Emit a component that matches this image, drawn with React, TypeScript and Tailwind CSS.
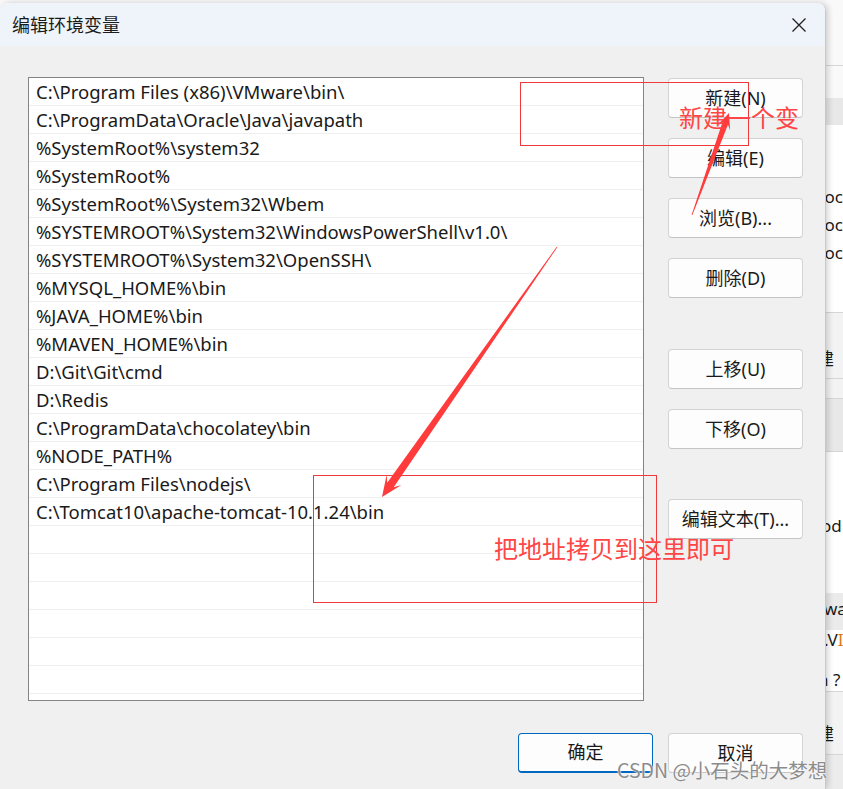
import React from "react";

const paths = [
  "C:\\Program Files (x86)\\VMware\\bin\\",
  "C:\\ProgramData\\Oracle\\Java\\javapath",
  "%SystemRoot%\\system32",
  "%SystemRoot%",
  "%SystemRoot%\\System32\\Wbem",
  "%SYSTEMROOT%\\System32\\WindowsPowerShell\\v1.0\\",
  "%SYSTEMROOT%\\System32\\OpenSSH\\",
  "%MYSQL_HOME%\\bin",
  "%JAVA_HOME%\\bin",
  "%MAVEN_HOME%\\bin",
  "D:\\Git\\Git\\cmd",
  "D:\\Redis",
  "C:\\ProgramData\\chocolatey\\bin",
  "%NODE_PATH%",
  "C:\\Program Files\\nodejs\\",
  "C:\\Tomcat10\\apache-tomcat-10.1.24\\bin",
];

const rows = [...paths, ...Array(22 - paths.length).fill("")];

const uiFont = { fontFamily: '"Noto Sans", "Noto Sans CJK SC", sans-serif' };
const cjkFont = { fontFamily: '"Noto Sans CJK SC", "Noto Sans", sans-serif' };

// tapered screenshot-tool style arrow, tail -> tip
function arrowPoints(tx: number, ty: number, px: number, py: number, head: number, half: number, neck: number) {
  const dx = px - tx;
  const dy = py - ty;
  const len = Math.hypot(dx, dy);
  const ux = dx / len;
  const uy = dy / len;
  const nx = -uy;
  const ny = ux;
  const bx = px - ux * head;
  const by = py - uy * head;
  const kx = px - ux * head * 0.7;
  const ky = py - uy * head * 0.7;
  const pts = [
    [tx + nx * 0.4, ty + ny * 0.4],
    [kx + nx * neck, ky + ny * neck],
    [bx + nx * half, by + ny * half],
    [px, py],
    [bx - nx * half, by - ny * half],
    [kx - nx * neck, ky - ny * neck],
    [tx - nx * 0.4, ty - ny * 0.4],
  ];
  return pts.map((p) => p.map((v) => v.toFixed(1)).join(",")).join(" ");
}

const DlgButton: React.FC<{ label: string; primary?: boolean }> = ({ label, primary }) => (
  <button
    className={
      primary
        ? "w-[135px] h-[40px] rounded-[4px] border border-[#0067c0] border-b-2 bg-[#fdfdfd] text-[18px] text-[#1a1a1a]"
        : "w-[135px] h-[40px] rounded-[4px] border border-[#d3d3d3] border-b-[#c4c4c4] bg-[#fdfdfd] text-[18px] text-[#1a1a1a]"
    }
    style={uiFont}
  >
    {label}
  </button>
);

const BackStrip: React.FC = () => (
  <div className="flex-1 flex flex-col overflow-hidden bg-[#f9f9f9] text-[17px] text-[#1a1a1a]" style={uiFont}>
    <div className="h-[66px] border-b border-[#d6d6d6]" />
    <div className="h-[32px]" />
    <div className="h-[27px] bg-[#e8e8e8]" />
    <div className="h-[58px] bg-white" />
    <div className="h-[28px] bg-white leading-[28px] whitespace-nowrap -ml-[6px]">loca</div>
    <div className="h-[28px] bg-white leading-[28px] whitespace-nowrap -ml-[6px]">loca</div>
    <div className="h-[28px] bg-white leading-[28px] whitespace-nowrap -ml-[6px]">loca</div>
    <div className="h-[46px] bg-white border-b border-[#d6d6d6]" />
    <div className="h-[32px] bg-[#f3f3f3]" />
    <div className="h-[34px] bg-[#f3f3f3] leading-[28px] whitespace-nowrap -ml-[9px] border-b border-[#d6d6d6]">建</div>
    <div className="h-[20px] bg-[#f3f3f3] border-b border-[#d6d6d6]" />
    <div className="h-[53px] bg-[#e8e8e8] border-b border-[#d6d6d6]" />
    <div className="h-[60px] bg-white" />
    <div className="h-[28px] bg-white leading-[28px] whitespace-nowrap -ml-[5px]">od</div>
    <div className="h-[53px] bg-white" />
    <div className="h-[37px] bg-[#ebebeb] leading-[32px] whitespace-nowrap -ml-[2px]">wa</div>
    <div className="h-[30px] bg-white leading-[20px] whitespace-nowrap -ml-[2px]">
      .V<span className="text-[#d97a1a]">I</span>
    </div>
    <div className="h-[32px] bg-white leading-[40px] whitespace-nowrap -ml-[8px] border-b border-[#d6d6d6]">n ?</div>
    <div className="h-[32px] bg-[#f3f3f3]" />
    <div className="h-[31px] bg-[#f3f3f3] leading-[20px] whitespace-nowrap -ml-[9px] border-b border-[#d6d6d6]">建</div>
    <div className="flex-1 bg-[#ececec]" />
  </div>
);

export default function App() {
  return (
    <div className="relative w-[843px] h-[789px] overflow-hidden bg-[#f9f9f9] flex">
      <div className="w-[826px] mt-[3px] flex flex-col rounded-t-[8px] overflow-hidden border-r border-[#c8c8c8] shadow-[2px_0_6px_rgba(0,0,0,0.18)] z-10">
        <div className="h-[43px] bg-[#eff3fa] flex items-center justify-between pl-[12px] pr-[18px]">
          <span className="text-[18px] text-[#1b1b1b]" style={cjkFont}>
            编辑环境变量
          </span>
          <svg width="16" height="16" viewBox="0 0 16 16">
            <path d="M1.5 1.5 L14.5 14.5 M14.5 1.5 L1.5 14.5" stroke="#1f1f1f" strokeWidth="1.3" fill="none" />
          </svg>
        </div>
        <div className="flex-1 bg-[#f0f0f0] flex flex-col pt-[31px]">
          <div className="flex">
            <div className="ml-[28px] w-[616px] h-[624px] border border-[#848484] bg-white overflow-hidden">
              {rows.map((p, i) => (
                <div
                  key={i}
                  className="h-[28px] border-b border-[#efefef] pl-[7px] text-[18.5px] leading-[28px] text-[#1a1a1a] whitespace-nowrap"
                  style={uiFont}
                >
                  {p}
                </div>
              ))}
            </div>
            <div className="ml-[24px] pt-[1px] flex flex-col">
              <DlgButton label="新建(N)" />
              <div className="h-[20px]" />
              <DlgButton label="编辑(E)" />
              <div className="h-[20px]" />
              <DlgButton label="浏览(B)..." />
              <div className="h-[20px]" />
              <DlgButton label="删除(D)" />
              <div className="h-[51px]" />
              <DlgButton label="上移(U)" />
              <div className="h-[20px]" />
              <DlgButton label="下移(O)" />
              <div className="h-[50px]" />
              <DlgButton label="编辑文本(T)..." />
            </div>
          </div>
          <div className="flex justify-end gap-[15px] pr-[22px] mt-[32px]">
            <DlgButton label="确定" primary />
            <DlgButton label="取消" />
          </div>
        </div>
      </div>
      <BackStrip />

      {/* red screenshot annotations */}
      <svg className="absolute inset-0 z-20 pointer-events-none" width="843" height="789">
        <rect x="520.5" y="82.5" width="228" height="63" fill="none" stroke="#ee3a3a" strokeWidth="1" />
        <rect x="313.5" y="475.5" width="343" height="127" fill="none" stroke="#ee3a3a" strokeWidth="1" />
        <polygon points={arrowPoints(692, 215, 729, 113, 16, 7, 3)} fill="#ff3b3b" />
        <polygon points={arrowPoints(557, 247, 382, 497, 21, 9, 4)} fill="#ff3b3b" />
      </svg>
      <span
        className="absolute z-20 left-[679px] top-[103px] text-[24px] leading-[28px] text-[#ff4545] whitespace-nowrap"
        style={cjkFont}
      >
        新建一个变
      </span>
      <span
        className="absolute z-20 left-[494px] top-[534px] text-[24px] leading-[28px] text-[#ff4545] whitespace-nowrap"
        style={cjkFont}
      >
        把地址拷贝到这里即可
      </span>
      <span
        className="absolute z-20 left-[617px] top-[758px] text-[19.5px] leading-[24px] text-[#8c8c8c] whitespace-nowrap [text-shadow:0_0_2px_#ffffff,0_0_1px_#ffffff]"
        style={cjkFont}
      >
        CSDN @小石头的大梦想
      </span>
    </div>
  );
}
